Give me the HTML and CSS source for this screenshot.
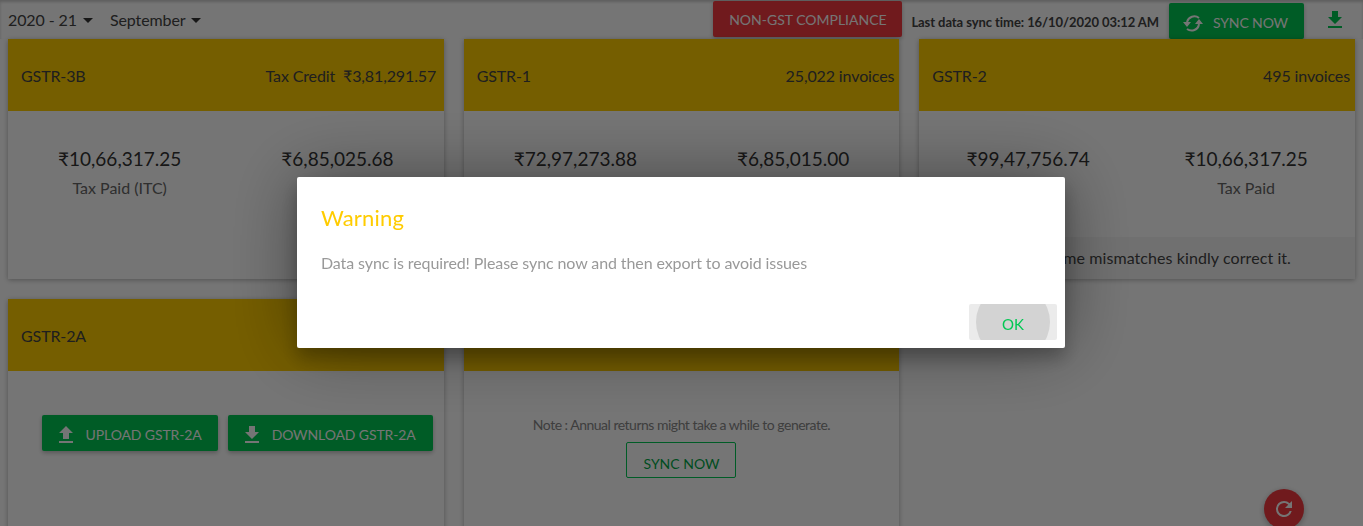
FILE: index.html
```html
<!DOCTYPE html>
<html lang="en">
<head>
  <meta charset="UTF-8">
  <meta name="viewport" content="width=device-width, initial-scale=1.0">
  <title>GST Dashboard</title>
  <link rel="stylesheet" href="styles.css">
</head>
<body>
  <div class="topbar">
    <div class="filters">
      <span class="filter">2020 - 21 <i class="caret"></i></span>
      <span class="filter">September <i class="caret"></i></span>
    </div>
    <div class="actions">
      <button class="btn btn-red">NON-GST COMPLIANCE</button>
      <span class="sync-time">Last data sync time: 16/10/2020 03:12 AM</span>
      <button class="btn btn-green btn-icon">
        <svg class="icon-sync" viewBox="0 0 24 24" width="24" height="24"><path fill="none" stroke="currentColor" stroke-width="2" d="M18 7a7.500 7.500 0 0 0-12 4M6 18a7.500 7.500 0 0 0 12-5"/><path fill="currentColor" d="M2 11h8l-4 5zM14 13h8l-4-5z"/></svg>
        SYNC NOW
      </button>
      <svg class="icon-export" viewBox="0 0 24 24" width="24" height="24"><path fill="currentColor" d="M19 9h-4V3H9v6H5l7 7 7-7zM5 18v2h14v-2H5z"/></svg>
    </div>
  </div>

  <div class="cards">
    <div class="card">
      <div class="card-head"><span>GSTR-3B</span><span class="head-credit">Tax Credit &nbsp;₹3,81,291.57</span></div>
      <div class="stats">
        <div class="stat"><div class="amount">₹10,66,317.25</div><div class="label">Tax Paid (ITC)</div></div>
        <div class="stat"><div class="amount">₹6,85,025.68</div><div class="label">Tax Paid</div></div>
      </div>
    </div>
    <div class="card">
      <div class="card-head"><span>GSTR-1</span><span>25,022 invoices</span></div>
      <div class="stats">
        <div class="stat"><div class="amount">₹72,97,273.88</div><div class="label">Sales</div></div>
        <div class="stat"><div class="amount">₹6,85,015.00</div><div class="label">Tax Liability</div></div>
      </div>
    </div>
    <div class="card">
      <div class="card-head"><span>GSTR-2</span><span>495 invoices</span></div>
      <div class="stats">
        <div class="stat"><div class="amount">₹99,47,756.74</div><div class="label">Purchase</div></div>
        <div class="stat"><div class="amount">₹10,66,317.25</div><div class="label">Tax Paid</div></div>
      </div>
      <div class="mismatch">There are some mismatches kindly correct it.</div>
    </div>
    <div class="card card-tall">
      <div class="card-head"><span>GSTR-2A</span></div>
      <div class="upload-row">
        <button class="btn btn-green btn-icon">
          <svg viewBox="0 0 24 24" width="24" height="24"><path fill="currentColor" d="M9 16h6v-6h4l-7-7-7 7h4v6zM5 18h14v2H5v-2z"/></svg>
          UPLOAD GSTR-2A
        </button>
        <button class="btn btn-green btn-icon">
          <svg viewBox="0 0 24 24" width="24" height="24"><path fill="currentColor" d="M19 9h-4V3H9v6H5l7 7 7-7zM5 18v2h14v-2H5z"/></svg>
          DOWNLOAD GSTR-2A
        </button>
      </div>
    </div>
    <div class="card card-tall">
      <div class="card-head"><span>GSTR-9</span></div>
      <div class="annual">
        <p class="note">Note : Annual returns might take a while to generate.</p>
        <button class="btn btn-outline">SYNC NOW</button>
      </div>
    </div>
  </div>

  <button class="fab">
    <svg viewBox="0 0 24 24" width="24" height="24"><path fill="currentColor" d="M17.650 6.350A7.958 7.958 0 0 0 12 4a8 8 0 1 0 7.730 10h-2.080A6 6 0 1 1 12 6c1.660 0 3.140.69 4.220 1.780L13 11h7V4l-2.350 2.350z"/></svg>
  </button>

  <div class="scrim"></div>

  <div class="modal">
    <h2 class="modal-title">Warning</h2>
    <p class="modal-text">Data sync is required! Please sync now and then export to avoid issues</p>
    <div class="modal-actions">
      <button class="ok"><span class="ripple"></span><span class="ok-label">OK</span></button>
    </div>
  </div>
</body>
</html>
```

FILE: styles.css
```css
* {
  margin: 0;
  padding: 0;
  box-sizing: border-box;
}

html, body {
  height: 100%;
  overflow: hidden;
}

body {
  font-family: 'Lato', 'Noto Sans', sans-serif;
  background-color: #fff;
  color: #333;
}

button {
  font-family: inherit;
  border: none;
  cursor: pointer;
}

.topbar {
  display: flex;
  justify-content: space-between;
  height: 39px;
  padding: 0 16px 0 8px;
  box-shadow: inset 0 2px 3px rgba(0, 0, 0, 0.2);
}

.filters {
  display: flex;
  align-items: center;
  gap: 17px;
  height: 39px;
}

.filter {
  font-size: 16px;
  letter-spacing: -0.1px;
  color: #444;
}

.caret {
  display: inline-block;
  margin-left: 2px;
  vertical-align: 3px;
  border-top: 5px solid #333;
  border-left: 5px solid transparent;
  border-right: 5px solid transparent;
}

.actions {
  display: flex;
  align-items: flex-start;
}

.btn {
  display: inline-flex;
  align-items: center;
  justify-content: center;
  height: 36px;
  font-size: 14px;
  border-radius: 2px;
  color: #fff;
  box-shadow: 0 2px 4px rgba(0, 0, 0, 0.25);
}

.btn-red {
  width: 189px;
  margin-top: 1px;
  background-color: #f43a3f;
}

.btn-green {
  background-color: #00c853;
}

.btn-icon {
  gap: 8px;
  padding: 2px 16px 0 12px;
  letter-spacing: -0.12px;
}

.btn-icon svg {
  margin-top: 2px;
}

.actions .btn-icon {
  margin-top: 3px;
}

.sync-time {
  margin: 14px 10px 0 9px;
  font-size: 13px;
  font-weight: 700;
  letter-spacing: -0.07px;
  color: #444;
}

.icon-export {
  margin: 8px 0 0 19px;
  color: #00c853;
}

.cards {
  display: grid;
  grid-template-columns: repeat(3, 1fr);
  gap: 20px;
  padding: 0 8px;
}

.card {
  position: relative;
  height: 240px;
  background-color: #fff;
  box-shadow: 0 1px 5px rgba(0, 0, 0, 0.3);
}

.card-tall {
  height: 300px;
}

.card-head {
  display: flex;
  justify-content: space-between;
  align-items: center;
  height: 72px;
  padding: 0 5px 0 13px;
  background-color: #ffcc00;
  font-size: 16px;
  letter-spacing: -0.12px;
  color: #444;
}

.head-credit {
  margin-right: 2.5px;
}

.stats {
  display: flex;
  justify-content: space-around;
  padding-top: 36px;
  text-align: center;
}

.amount {
  font-size: 19px;
  color: #333;
}

.label {
  margin-top: 8px;
  font-size: 16px;
  color: #666;
}

.mismatch {
  position: absolute;
  left: 0;
  right: 0;
  bottom: 0;
  height: 42px;
  padding: 0 64px 0 0;
  background-color: #f5f5f5;
  font-size: 16px;
  letter-spacing: 0.08px;
  line-height: 42px;
  text-align: right;
  color: #444;
}

.upload-row {
  display: flex;
  justify-content: flex-end;
  gap: 10px;
  padding: 44px 11px 0 0;
}

.upload-row .btn-icon:last-child {
  padding-right: 17px;
}

.annual {
  padding-top: 45px;
  text-align: center;
}

.note {
  font-size: 14px;
  letter-spacing: -0.5px;
  color: #888;
}

.btn-outline {
  width: 110px;
  margin-top: 9px;
  padding-top: 6px;
  background: none;
  border: 1px solid #00c853;
  color: #00a847;
  box-shadow: none;
}

.fab {
  position: fixed;
  left: 1264px;
  top: 489px;
  width: 40px;
  height: 40px;
  display: flex;
  align-items: center;
  justify-content: center;
  border-radius: 50%;
  background-color: #f43a3f;
  color: #fff;
  box-shadow: 0 2px 6px rgba(0, 0, 0, 0.3);
}

.scrim {
  position: fixed;
  inset: 0;
  background-color: rgba(0, 0, 0, 0.54);
}

.modal {
  position: fixed;
  left: 297px;
  top: 177px;
  width: 768px;
  height: 171px;
  padding: 24px 8px 8px 24px;
  background-color: #fff;
  border-radius: 2px;
  box-shadow: 0 0 70px rgba(0, 0, 0, 0.4), 0 10px 18px rgba(0, 0, 0, 0.25);
}

.modal-title {
  font-size: 22px;
  font-weight: 400;
  letter-spacing: 0.2px;
  line-height: 34px;
  color: #ffcc00;
}

.modal-text {
  margin-top: 16px;
  font-size: 16px;
  letter-spacing: -0.1px;
  line-height: 24px;
  color: #999;
}

.modal-actions {
  position: absolute;
  right: 8px;
  bottom: 8px;
}

.ok {
  position: relative;
  display: block;
  width: 88px;
  height: 36px;
  padding-top: 3px;
  overflow: hidden;
  background-color: #ebebeb;
  border-radius: 2px;
}

.ripple {
  position: absolute;
  left: 7px;
  top: -19px;
  width: 74px;
  height: 74px;
  border-radius: 50%;
  background-color: #d3d3d3;
}

.ok-label {
  position: relative;
  font-size: 15px;
  color: #00c853;
}
```
